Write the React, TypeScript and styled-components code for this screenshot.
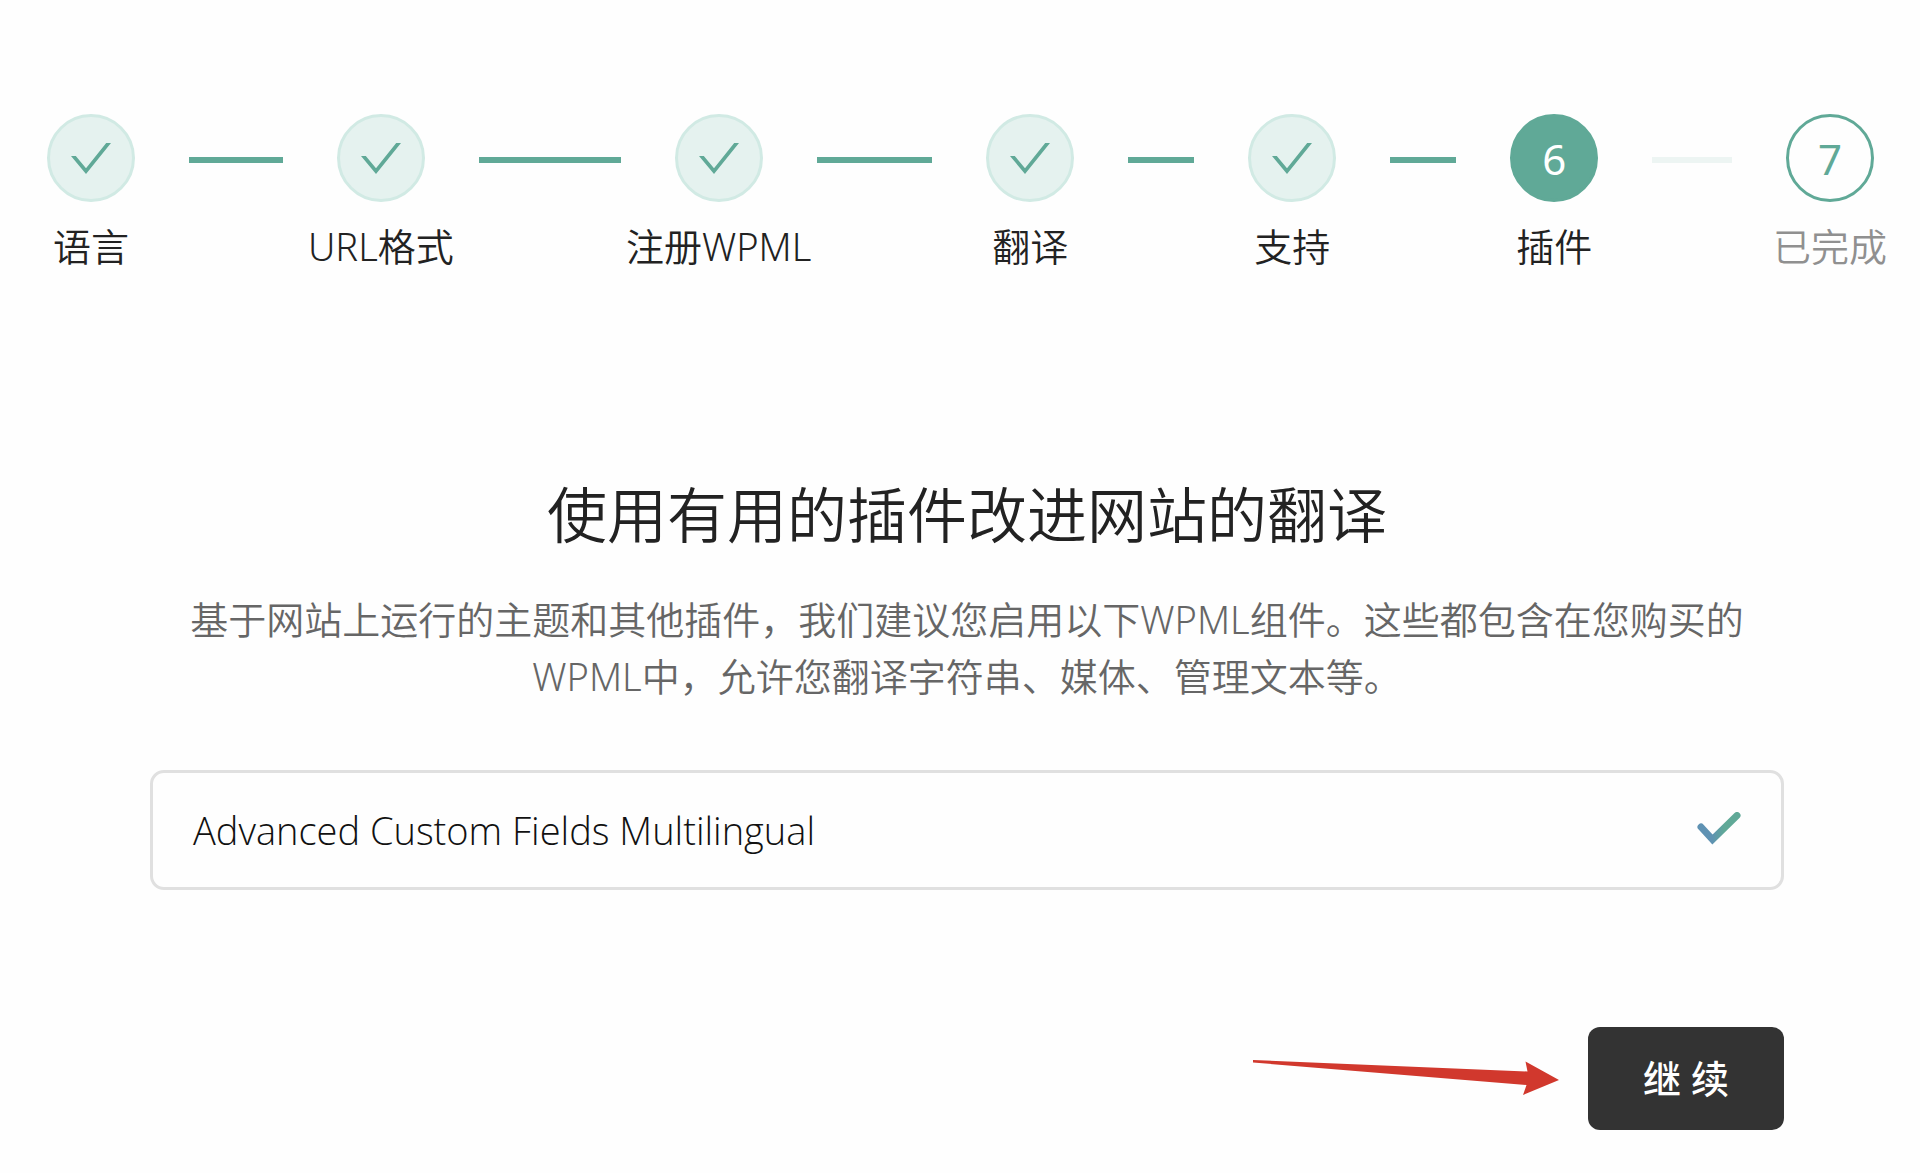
import React from 'react';
import styled, { createGlobalStyle, css } from 'styled-components';

const GlobalStyle = createGlobalStyle`
  *, *::before, *::after { box-sizing: border-box; }
  body {
    margin: 0;
    background: #fefefe;
    color: #222;
    font-family: "Noto Sans", "Noto Sans CJK SC", sans-serif;
    font-size: 38px;
    font-weight: 350;
    line-height: 57px;
  }
`;

type StepState = 'done' | 'current' | 'upcoming';

interface StepData {
  label: string;
  state: StepState;
  /** Share of the free width taken by the line that follows the step. */
  line?: number;
}

const steps: StepData[] = [
  { label: '语言', state: 'done', line: 94 },
  { label: 'URL格式', state: 'done', line: 142 },
  { label: '注册WPML', state: 'done', line: 116 },
  { label: '翻译', state: 'done', line: 66 },
  { label: '支持', state: 'done', line: 66 },
  { label: '插件', state: 'current', line: 80 },
  { label: '已完成', state: 'upcoming' },
];

const Page = styled.div`
  padding: 114px 0 43px;
`;

const StepList = styled.ol`
  display: flex;
  align-items: flex-start;
  margin: 0;
  padding: 0 46px 0 47px;
  list-style: none;
`;

const Step = styled.li<{ $state: StepState }>`
  display: flex;
  flex: none;
  flex-direction: column;
  align-items: center;
  gap: 16px;
  width: 88px;
  white-space: nowrap;
  color: ${({ $state }) => ($state === 'upcoming' ? '#909090' : '#222')};
`;

const circleStyles = {
  done: css`
    background: #e5f2ef;
    border-color: #d1eae4;
  `,
  current: css`
    background: #60a997;
    border-color: #60a997;
    color: #fff;
  `,
  upcoming: css`
    border-color: #60a997;
    color: #60a997;
  `,
};

const Circle = styled.span<{ $state: StepState }>`
  display: grid;
  place-items: center;
  width: 88px;
  height: 88px;
  border: 3px solid;
  border-radius: 50%;
  font-size: 42px;
  font-weight: 400;
  ${({ $state }) => circleStyles[$state]}
`;

const StepTick = styled.svg`
  width: 40px;
  height: 32px;
  fill: #60a997;
`;

const Connector = styled.li<{ $share: number; $passed: boolean }>`
  flex: ${({ $share }) => $share} 1 0;
  height: 6px;
  margin: 43px 54px 0;
  background: ${({ $passed }) => ($passed ? '#60a997' : '#edf5f3')};
`;

const Content = styled.main`
  margin: 198px 136px 0 150px;
`;

const Title = styled.h1`
  margin: 0;
  font-size: 60px;
  font-weight: 350;
  line-height: 84px;
  text-align: center;
`;

const Intro = styled.p`
  margin: 34px 0 65px;
  padding: 0 30px;
  color: #666;
  text-align: center;
`;

const PluginList = styled.ul`
  margin: 0;
  padding: 0;
  list-style: none;
`;

const PluginRow = styled.li`
  display: flex;
  align-items: center;
  justify-content: space-between;
  height: 120px;
  padding: 0 40px;
  border: 3px solid #e0e0e0;
  border-radius: 14px;
  font-family: "Open Sans", "Noto Sans CJK SC", sans-serif;
  color: #111;
`;

const PluginTick = styled.svg`
  width: 44px;
  height: 36px;
`;

const Actions = styled.div`
  display: flex;
  align-items: center;
  justify-content: flex-end;
  gap: 29px;
  margin-top: 137px;
`;

const Arrow = styled.svg`
  width: 306px;
  height: 38px;
  fill: #d1382d;
`;

const ContinueButton = styled.button`
  width: 196px;
  height: 103px;
  padding: 0;
  border: 0;
  border-radius: 12px;
  background: #333;
  color: #fff;
  font: inherit;
  font-weight: 500;
  cursor: pointer;
`;

export default function App() {
  return (
    <Page>
      <GlobalStyle />
      <StepList>
        {steps.map((step, index) => (
          <React.Fragment key={step.label}>
            <Step
              $state={step.state}
              aria-current={step.state === 'current' ? 'step' : undefined}
            >
              <Circle $state={step.state}>
                {step.state === 'done' ? (
                  <StepTick viewBox="0 0 40 32" aria-hidden="true">
                    <path d="M0 14 H4.800 L15 26.300 L35.200 1 H40 L15 32 Z" />
                  </StepTick>
                ) : (
                  index + 1
                )}
              </Circle>
              {step.label}
            </Step>
            {step.line && (
              <Connector
                aria-hidden="true"
                $share={step.line}
                $passed={step.state === 'done'}
              />
            )}
          </React.Fragment>
        ))}
      </StepList>

      <Content>
        <Title>使用有用的插件改进网站的翻译</Title>
        <Intro>
          基于网站上运行的主题和其他插件，我们建议您启用以下WPML组件。这些都包含在您购买的WPML中，允许您翻译字符串、媒体、管理文本等。
        </Intro>

        <PluginList>
          <PluginRow>
            Advanced Custom Fields Multilingual
            <PluginTick viewBox="0 0 44 36" aria-hidden="true">
              <defs>
                <linearGradient id="tick" x1="0" y1="0" x2="1" y2="0">
                  <stop offset="0.3" stopColor="#5f92b3" />
                  <stop offset="0.65" stopColor="#60a997" />
                </linearGradient>
              </defs>
              <path
                d="M4 15 L15.500 27.500 L40 3.500"
                fill="none"
                stroke="url(#tick)"
                strokeWidth="7"
                strokeLinecap="round"
              />
            </PluginTick>
          </PluginRow>
        </PluginList>

        <Actions>
          <Arrow viewBox="0 0 306 38" aria-hidden="true">
            <path d="M0 0 L274.500 11.500 L272.500 1.500 L306 20 L270 35 L273.500 25 L0 2.500 Z" />
          </Arrow>
          <ContinueButton type="button">继 续</ContinueButton>
        </Actions>
      </Content>
    </Page>
  );
}
